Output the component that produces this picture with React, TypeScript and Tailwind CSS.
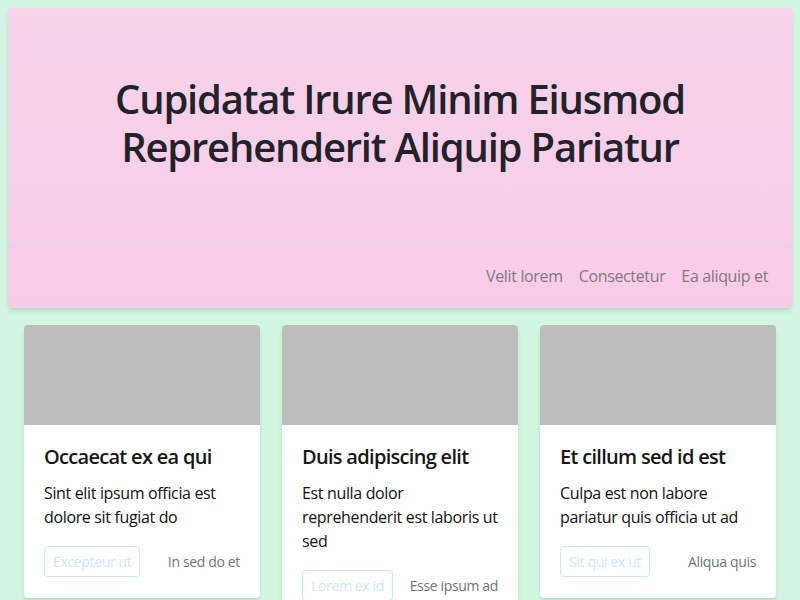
const cards = [
  {
    title: 'Occaecat ex ea qui',
    text: 'Sint elit ipsum officia est dolore sit fugiat do',
    button: 'Excepteur ut',
    note: 'In sed do et',
  },
  {
    title: 'Duis adipiscing elit',
    text: 'Est nulla dolor reprehenderit est laboris ut sed',
    button: 'Lorem ex id',
    note: 'Esse ipsum ad',
  },
  {
    title: 'Et cillum sed id est',
    text: 'Culpa est non labore pariatur quis officia ut ad',
    button: 'Sit qui ex ut',
    note: 'Aliqua quis',
  },
];

export default function App() {
  return (
    <div className="min-h-screen bg-[#d1f7e2] p-2 font-['Open_Sans',sans-serif] tracking-[-0.35px] text-[#212529]">
      {/* Header */}
      <header className="bg-gradient-to-b from-[#f8d3ea] to-[#f8cce6] shadow-md">
        <div className="flex h-[233px] items-center justify-center px-8 pb-1">
          <h1 className="text-center text-[40px] font-semibold leading-[48px] tracking-[-1.2px] text-[#22232a]">
            <span className="block">Cupidatat Irure Minim Eiusmod</span>
            <span className="block">Reprehenderit Aliquip Pariatur</span>
          </h1>
        </div>
        <nav className="flex h-[67px] items-center justify-end border-t-2 border-[#e6d5e0] px-4">
          {['Velit lorem', 'Consectetur', 'Ea aliquip et'].map((l) => (
            <a key={l} className="px-2 text-base text-[#85777f]">
              {l}
            </a>
          ))}
        </nav>
      </header>

      {/* Cards */}
      <div className="mt-[17px] grid grid-cols-3 items-start gap-[22px] px-4">
        {cards.map((c) => (
          <div key={c.title} className="overflow-hidden rounded bg-white shadow-md">
            <div className="h-[100px] bg-[#bdbdbd]" />
            <div className="p-5 pb-[21px]">
              <h3 className="mb-3 text-xl font-semibold leading-6 tracking-[-0.7px] text-[#161616]">{c.title}</h3>
              <p className="text-base leading-6 text-[#111]">{c.text}</p>
              <div className="mt-[17px] flex items-center justify-between">
                <button className="rounded border border-[#cfe2f5] px-2 py-1 text-sm leading-[21px] text-[#cfe5fb]">
                  {c.button}
                </button>
                <span className="text-sm text-[#6c757d]">{c.note}</span>
              </div>
            </div>
          </div>
        ))}
      </div>
    </div>
  );
}
